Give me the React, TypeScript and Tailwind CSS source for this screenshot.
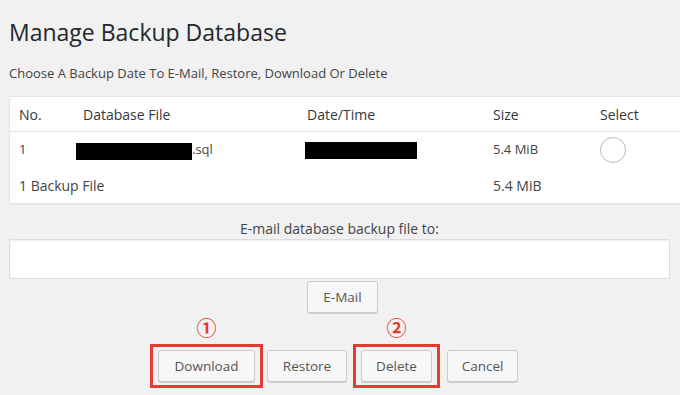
import React from "react";

const btn =
  "h-[32px] flex items-center justify-center bg-[#f7f7f7] border border-[#cccccc] rounded-[3px] shadow-[0_1px_0_#cccccc] text-[#555555] text-[13.5px]";

export default function App() {
  return (
    <div
      className="w-[680px] h-[395px] overflow-hidden bg-[#f1f1f1] pl-[9px] pt-[18px] text-[#444444]"
      style={{ fontFamily: '"Open Sans", "Noto Sans", sans-serif' }}
    >
      <h1 className="text-[23px] leading-[29px] text-[#23282d] font-normal">Manage Backup Database</h1>
      <p className="mt-[16px] text-[13px] leading-[20px] text-[#444444]">
        Choose A Backup Date To E-Mail, Restore, Download Or Delete
      </p>

      <div className="mt-[13px] w-[700px] bg-white border border-[#e5e5e5] shadow-[0_1px_1px_rgba(0,0,0,0.04)]">
        <div className="grid grid-cols-[64px_224px_186px_107px_1fr] h-[35px] items-center border-b border-[#e1e1e1] text-[14px] text-[#32373c]">
          <div className="pl-[9px]">No.</div>
          <div className="pl-[9px]">Database File</div>
          <div className="pl-[9px]">Date/Time</div>
          <div className="pl-[9px]">Size</div>
          <div className="pl-[9px]">Select</div>
        </div>
        <div className="grid grid-cols-[64px_224px_186px_107px_1fr] h-[36px] items-center text-[13px] text-[#444444]">
          <div className="pl-[9px]">1</div>
          <div className="pl-[2px] flex items-center">
            <span className="inline-block w-[116px] h-[17px] bg-black mt-[2px]" />
            <span>.sql</span>
          </div>
          <div className="flex items-center">
            <span className="inline-block w-[112px] h-[17px] bg-black ml-[7px]" />
          </div>
          <div className="pl-[9px]">5.4 MiB</div>
          <div className="pl-[9px] flex items-center">
            <span className="inline-block w-[26px] h-[26px] rounded-full border border-[#b4b9be] bg-white" />
          </div>
        </div>
        <div className="grid grid-cols-[64px_224px_186px_107px_1fr] h-[35px] items-center text-[14px] text-[#444444]">
          <div className="col-span-3 pl-[9px]">1 Backup File</div>
          <div className="pl-[9px]">5.4 MiB</div>
          <div />
        </div>
      </div>

      <div className="w-[661px] mt-[15px] flex flex-col items-center">
        <div className="text-[14px] leading-[20px] text-[#444444]">E-mail database backup file to:</div>
        <div className="w-[661px] h-[40px] bg-white border border-[#dddddd] shadow-[inset_0_1px_2px_rgba(0,0,0,0.07)]" />
        <div className="mt-[2px] pl-[6px]">
          <button className={btn + " w-[71px] h-[31px]"}>E-Mail</button>
        </div>
      </div>

      <div className="mt-[5px] pl-[141px] flex items-start">
        <div className="flex flex-col items-center">
          <div className="h-[20px] leading-[20px] text-[20px] font-bold text-[#e53a30]" style={{ fontFamily: '"Noto Sans CJK JP", sans-serif' }}>
            ①
          </div>
          <div className="mt-[6px] border-[3px] border-[#e53a30] px-[5px] py-[3px]">
            <button className={btn + " w-[97px]"}>Download</button>
          </div>
        </div>
        <div className="mt-[32px] ml-[4px]">
          <button className={btn + " w-[80px]"}>Restore</button>
        </div>
        <div className="flex flex-col items-center ml-[6px]">
          <div className="h-[20px] leading-[20px] text-[20px] font-bold text-[#e53a30]" style={{ fontFamily: '"Noto Sans CJK JP", sans-serif' }}>
            ②
          </div>
          <div className="mt-[6px] border-[3px] border-[#e53a30] px-[5px] py-[3px]">
            <button className={btn + " w-[71px]"}>Delete</button>
          </div>
        </div>
        <div className="mt-[32px] ml-[7px]">
          <button className={btn + " w-[71px]"}>Cancel</button>
        </div>
      </div>
    </div>
  );
}
